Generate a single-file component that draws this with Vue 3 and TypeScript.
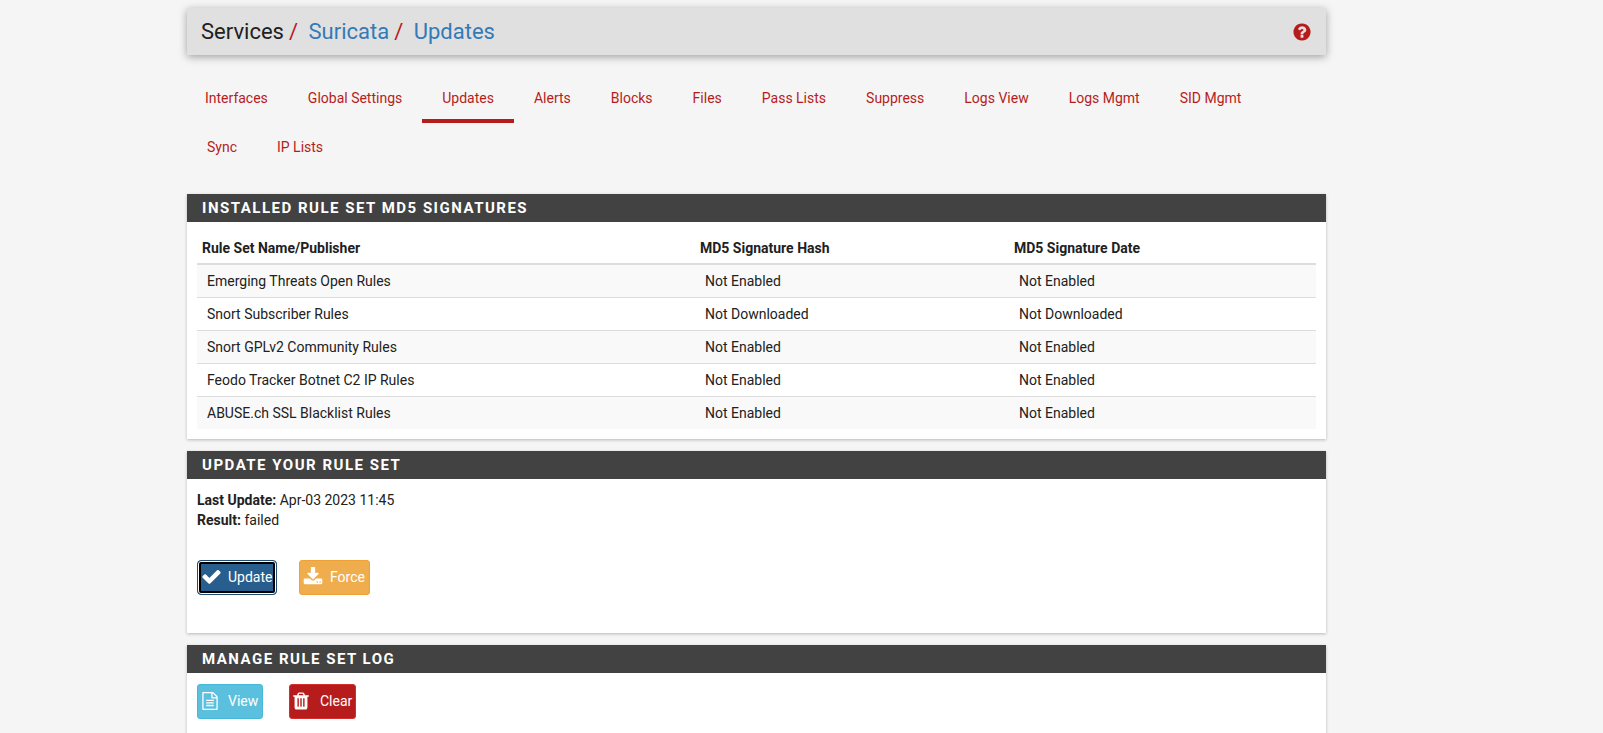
<template>
  <div class="page">
    <header class="crumbs">
      <h1>
        <span>Services</span><i>/</i>
        <a>Suricata</a><i>/</i>
        <a>Updates</a>
      </h1>
      <svg class="help" viewBox="0 0 1792 1792"><path :d="icons.help" /></svg>
    </header>

    <nav class="tabs">
      <a v-for="t in tabs" :key="t" class="tab" :class="{ active: t === 'Updates' }">{{ t }}</a>
    </nav>

    <section class="panel first">
      <h2>Installed Rule Set MD5 Signatures</h2>
      <div class="body">
        <table>
          <thead>
            <tr>
              <th class="c1">Rule Set Name/Publisher</th>
              <th class="c2">MD5 Signature Hash</th>
              <th class="c3">MD5 Signature Date</th>
            </tr>
          </thead>
          <tbody>
            <tr v-for="r in rules" :key="r.name">
              <td>{{ r.name }}</td>
              <td>{{ r.status }}</td>
              <td>{{ r.status }}</td>
            </tr>
          </tbody>
        </table>
      </div>
    </section>

    <section class="panel second">
      <h2>Update Your Rule Set</h2>
      <div class="body">
        <p><b>Last Update:</b> Apr-03 2023 11:45</p>
        <p><b>Result:</b> failed</p>
        <div class="actions">
          <button class="btn update">
            <svg viewBox="0 0 1792 1792"><path :d="icons.check" /></svg>Update
          </button>
          <button class="btn force">
            <svg viewBox="0 0 1792 1792"><path :d="icons.download" /></svg>Force
          </button>
        </div>
      </div>
    </section>

    <section class="panel third">
      <h2>Manage Rule Set Log</h2>
      <div class="body">
        <div class="actions log">
          <button class="btn view">
            <svg viewBox="0 0 1792 1792"><path :d="icons.file" /></svg>View
          </button>
          <button class="btn clear">
            <svg viewBox="0 0 1792 1792"><path :d="icons.trash" /></svg>Clear
          </button>
        </div>
      </div>
    </section>
  </div>
</template>

<script setup lang="ts">
const tabs = [
  'Interfaces', 'Global Settings', 'Updates', 'Alerts', 'Blocks', 'Files',
  'Pass Lists', 'Suppress', 'Logs View', 'Logs Mgmt', 'SID Mgmt', 'Sync', 'IP Lists'
]

const rules = [
  { name: 'Emerging Threats Open Rules', status: 'Not Enabled' },
  { name: 'Snort Subscriber Rules', status: 'Not Downloaded' },
  { name: 'Snort GPLv2 Community Rules', status: 'Not Enabled' },
  { name: 'Feodo Tracker Botnet C2 IP Rules', status: 'Not Enabled' },
  { name: 'ABUSE.ch SSL Blacklist Rules', status: 'Not Enabled' }
]

const icons = {
  help: 'M1024 1376v-192q0-14-9-23t-23-9h-192q-14 0-23 9t-9 23v192q0 14 9 23t23 9h192q14 0 23-9t9-23zm256-672q0-88-55.5-163t-138.5-116-170-41q-243 0-371 213-15 24 8 42l132 100q7 6 19 6 16 0 25-12 53-68 86-92 34-24 86-24 48 0 85.5 26t37.5 59q0 38-20 61t-68 45q-63 28-115.5 86.5t-52.5 125.5v36q0 14 9 23t23 9h192q14 0 23-9t9-23q0-19 21.5-49.5t54.5-49.5q32-18 49-28.5t46-35 44.5-48 28-60.5 12.5-81zm384 192q0 209-103 385.5t-279.5 279.5-385.5 103-385.5-103-279.5-279.5-103-385.5 103-385.5 279.5-279.5 385.5-103 385.5 103 279.5 279.5 103 385.5z',
  check: 'M1671 566q0 40-28 68l-724 724-136 136q-28 28-68 28t-68-28l-136-136-362-362q-28-28-28-68t28-68l136-136q28-28 68-28t68 28l294 295 656-657q28-28 68-28t68 28l136 136q28 28 28 68z',
  download: 'M1344 1344q0-26-19-45t-45-19-45 19-19 45 19 45 45 19 45-19 19-45zm256 0q0-26-19-45t-45-19-45 19-19 45 19 45 45 19 45-19 19-45zm128-224v320q0 40-28 68t-68 28h-1472q-40 0-68-28t-28-68v-320q0-40 28-68t68-28h465l135 136q58 56 136 56t136-56l136-136h464q40 0 68 28t28 68zm-325-569q17 41-14 70l-448 448q-18 19-45 19t-45-19l-448-448q-31-29-14-70 17-39 59-39h256v-448q0-26 19-45t45-19h256q26 0 45 19t19 45v448h256q42 0 59 39z',
  file: 'M1596 380q28 28 48 76t20 88v1152q0 40-28 68t-68 28h-1344q-40 0-68-28t-28-68v-1600q0-40 28-68t68-28h896q40 0 88 20t76 48zm-444-244v376h376q-10-29-22-41l-313-313q-12-12-41-22zm384 1528v-1024h-416q-40 0-68-28t-28-68v-416h-768v1536h1280zm-1024-864q0-14 9-23t23-9h704q14 0 23 9t9 23v64q0 14-9 23t-23 9h-704q-14 0-23-9t-9-23v-64zm736 224q14 0 23 9t9 23v64q0 14-9 23t-23 9h-704q-14 0-23-9t-9-23v-64q0-14 9-23t23-9h704zm0 256q14 0 23 9t9 23v64q0 14-9 23t-23 9h-704q-14 0-23-9t-9-23v-64q0-14 9-23t23-9h704z',
  trash: 'M704 1376v-704q0-14-9-23t-23-9h-64q-14 0-23 9t-9 23v704q0 14 9 23t23 9h64q14 0 23-9t9-23zm256 0v-704q0-14-9-23t-23-9h-64q-14 0-23 9t-9 23v704q0 14 9 23t23 9h64q14 0 23-9t9-23zm256 0v-704q0-14-9-23t-23-9h-64q-14 0-23 9t-9 23v704q0 14 9 23t23 9h64q14 0 23-9t9-23zm-544-992h448l-48-117q-7-9-17-11h-317q-10 2-17 11zm928 32v64q0 14-9 23t-23 9h-96v948q0 83-47 143.5t-113 60.5h-832q-66 0-113-58.5t-47-141.5v-952h-96q-14 0-23-9t-9-23v-64q0-14 9-23t23-9h309l70-167q15-37 54-63t79-26h320q40 0 79 26t54 63l70 167h309q14 0 23 9t9 23z'
}
</script>

<style>
html,
body {
  margin: 0;
  height: 100%;
  overflow: hidden;
  background: #f5f5f5;
}
</style>

<style scoped>
.page {
  width: 1139px;
  margin-left: 187px;
  padding-top: 8px;
  font-family: Roboto, "Liberation Sans", sans-serif;
  font-size: 14px;
  line-height: 20px;
  color: #212121;
}

.crumbs {
  display: flex;
  align-items: center;
  justify-content: space-between;
  height: 47px;
  padding: 0 14px;
  background: #e0e0e0;
  box-shadow: 0 2px 8px rgba(0, 0, 0, 0.35);
}

.crumbs h1 {
  margin: 0;
  font-size: 22px;
  font-weight: 400;
  line-height: 28px;
}

.crumbs a {
  color: #337ab7;
}

.crumbs i {
  margin: 0 10.5px 0 5px;
  font-style: normal;
  color: #b71c1c;
}

.help {
  width: 20px;
  height: 20px;
  fill: #b71c1c;
}

.tabs {
  display: flex;
  flex-wrap: wrap;
  margin-left: -2px;
  padding: 19px 60px 0 0;
  margin-bottom: 22px;
}

.tab {
  height: 49px;
  box-sizing: border-box;
  padding: 14px 20px 0;
  line-height: 20px;
  font-size: 14px;
  color: #b71c1c;
  border-bottom: 4px solid transparent;
}

/* second row sits a touch further right */
.tab:nth-child(12) {
  margin-left: 2px;
}

.tab.active {
  border-bottom-color: #b71c1c;
}

.panel {
  margin-bottom: 12px;
  background: #fff;
  box-shadow: 0 1px 3px rgba(0, 0, 0, 0.25);
}

.panel h2 {
  margin: 0;
  height: 28px;
  padding: 0 15px;
  background: #424242;
  color: #fff;
  font-size: 15px;
  font-weight: 700;
  line-height: 28px;
  letter-spacing: 1.5px;
  text-transform: uppercase;
}

.body {
  padding: 10px;
}

.second .body {
  height: 154px;
  padding-top: 11px;
  box-sizing: border-box;
}

.third .body {
  height: 120px;
  box-sizing: border-box;
}

table {
  width: 100%;
  border-collapse: collapse;
  table-layout: fixed;
  font-size: 14px;
}

th {
  height: 32px;
  padding: 0 5px;
  box-sizing: border-box;
  text-align: left;
  font-weight: 700;
  border-bottom: 2px solid #ddd;
}

.c1 {
  width: 498px;
}

.c2 {
  width: 314px;
}

td {
  height: 32px;
  padding: 0 10px;
  border-top: 1px solid #ddd;
}

tbody tr:first-child td {
  border-top: 0;
}

tbody tr:nth-child(odd) {
  background: #f9f9f9;
}

p {
  margin: 0;
  font-size: 14px;
}

.actions {
  display: flex;
  gap: 22px;
  margin-top: 30px;
}

.actions.log {
  margin-top: 1px;
  gap: 26px;
}

.btn {
  display: flex;
  align-items: center;
  height: 35px;
  box-sizing: border-box;
  padding: 0 0 2px 3px;
  border: 1px solid transparent;
  border-radius: 3px;
  color: #fff;
  font-family: inherit;
  font-size: 14px;
}

.btn svg {
  flex: none;
  fill: #fff;
}

.update {
  width: 80px;
  background: #285e8e;
  border-color: #204d74;
  border-radius: 4px;
  box-shadow: inset 0 0 0 1px #fff, inset 0 0 0 3px #000;
}

.update svg {
  width: 21px;
  height: 21px;
  margin-right: 6px;
}

.force {
  width: 71px;
  background: #f0ad4e;
  border-color: #eea236;
}

.force svg {
  width: 20px;
  height: 20px;
  margin-right: 7px;
}

.view {
  width: 66px;
  background: #5bc0de;
  border-color: #46b8da;
}

.view svg {
  width: 18px;
  height: 18px;
  margin-right: 9px;
}

.clear {
  width: 67px;
  padding-left: 1px;
  background: #b71c1c;
  border-color: #d32f2f;
}

.clear svg {
  width: 20px;
  height: 20px;
  margin-right: 9px;
}
</style>
